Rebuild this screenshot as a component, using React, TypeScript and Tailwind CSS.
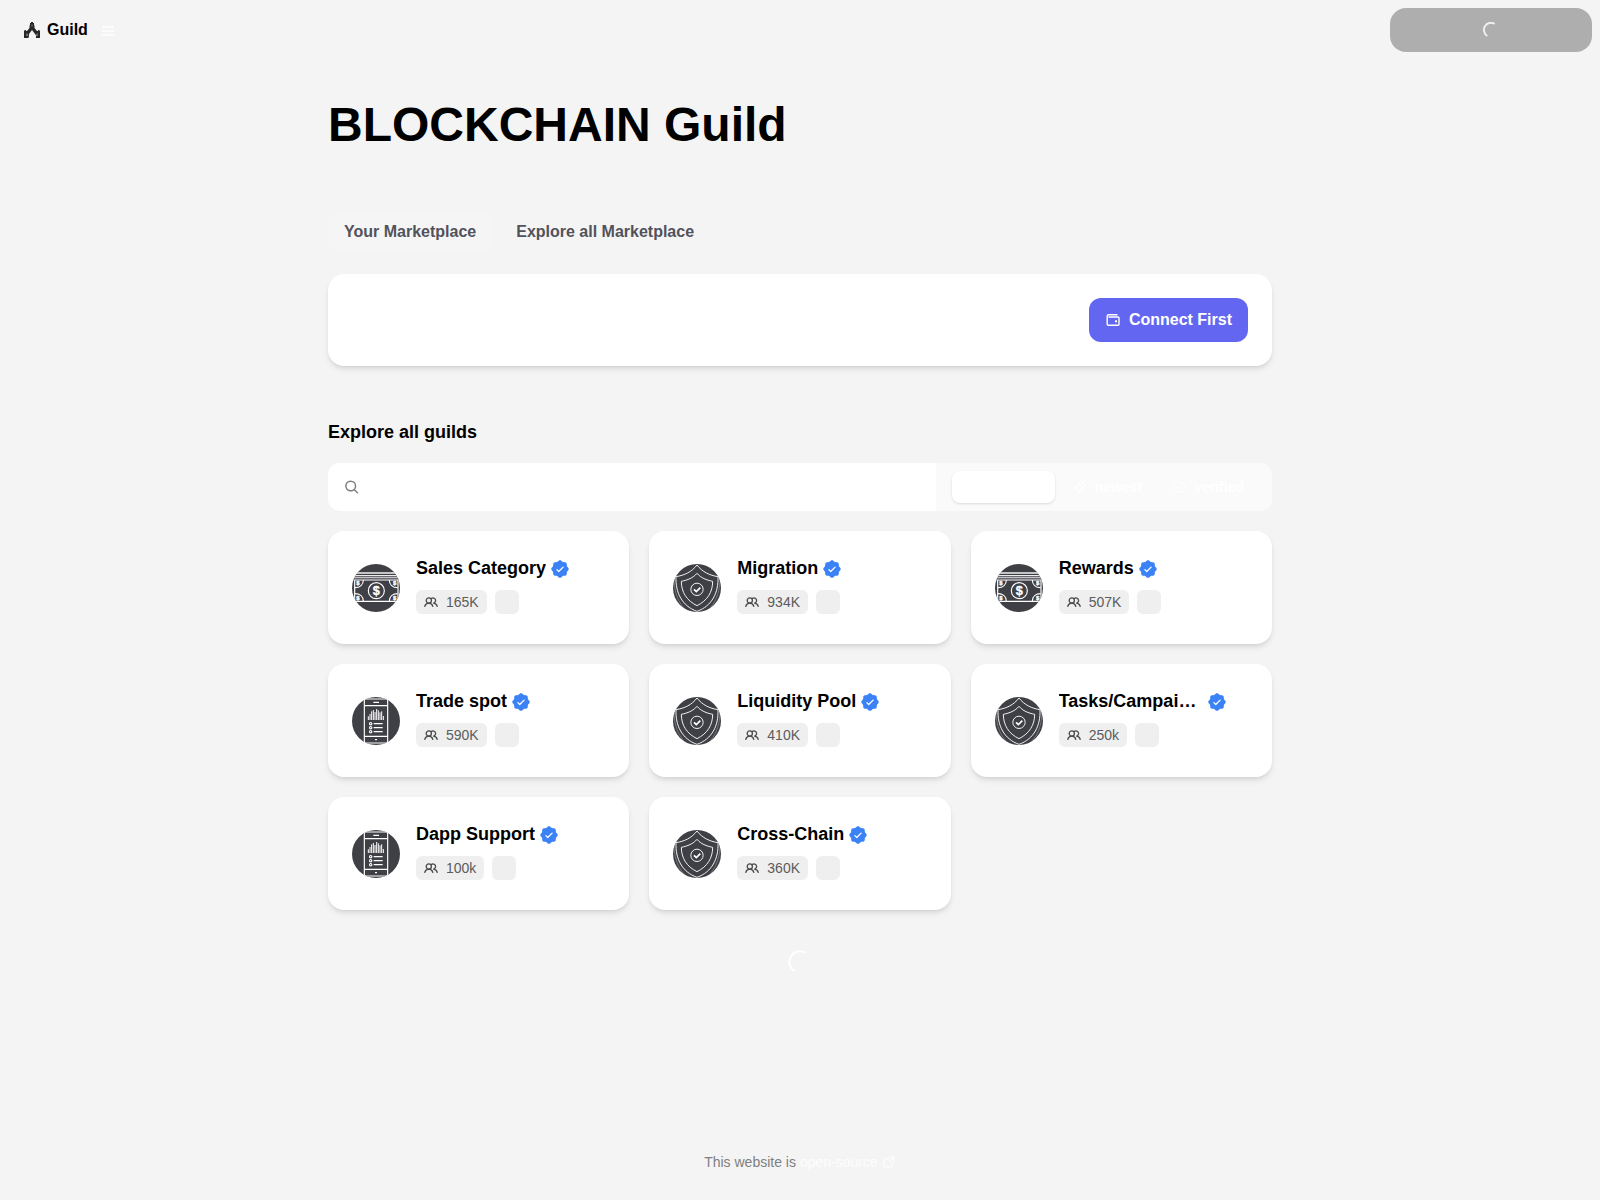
import React from 'react';
import { PiArrowSquareOutBold, PiMagnifyingGlassBold, PiSealCheck, PiSealCheckFill, PiSparkle } from 'react-icons/pi';

type Emblem = 'money' | 'shield' | 'phone';

interface Guild {
  name: string;
  members: string;
  emblem: Emblem;
}

const guilds: Guild[] = [
  { name: 'Sales Category', members: '165K', emblem: 'money' },
  { name: 'Migration', members: '934K', emblem: 'shield' },
  { name: 'Rewards', members: '507K', emblem: 'money' },
  { name: 'Trade spot', members: '590K', emblem: 'phone' },
  { name: 'Liquidity Pool', members: '410K', emblem: 'shield' },
  { name: 'Tasks/Campaigns', members: '250k', emblem: 'shield' },
  { name: 'Dapp Support', members: '100k', emblem: 'phone' },
  { name: 'Cross-Chain', members: '360K', emblem: 'shield' },
];

const GuildLogo: React.FC = () => (
  <svg className="size-4" viewBox="0 0 16 16" aria-hidden="true">
    <path
      d="M6 1h1V0h2v1h1v2l.5.5V6l2.500 3h1V8h1v1h.500V8h.500v8h-4v-2.500L11 12l-3-4-3 4v1.500L4.500 16H0V8h.500v1H1V8h1v1h1l2.500-3V3.500L6 3z"
      fill="#27272a"
    />
    <path d="M7.300 2.500h1.400v2H7.300z" fill="#71717a" />
    <path d="M2.500 11l1.500 1v2H2zM13.500 11L12 12v2h2z" fill="#71717a" />
  </svg>
);

const WalletIcon: React.FC = () => (
  <svg className="size-4" viewBox="0 0 16 16" fill="none" stroke="currentColor" strokeWidth="1.400" strokeLinejoin="round" aria-hidden="true">
    <path d="M12.500 2.700H3.600A1.400 1.400 0 0 0 2.200 4v8.200a1 1 0 0 0 1 1h9.800a1 1 0 0 0 1-1V6a1 1 0 0 0-1-1H3.500" />
    <path d="M10 8.200h2v2h-2z" fill="currentColor" stroke="none" />
  </svg>
);

const MembersIcon: React.FC = () => (
  <svg className="size-[14px]" viewBox="0 0 14 14" fill="none" stroke="#4b4b4b" strokeWidth="1.300" strokeLinecap="round" aria-hidden="true">
    <circle cx="4.800" cy="5.500" r="2.600" />
    <path d="M.8 11.300c.5-2 2-3.100 4-3.100s3.500 1.100 4 3.100" />
    <path d="M7.500 3.400a2.600 2.600 0 1 1 1.700 4.700c2 0 3.500 1.200 4 3.200" />
  </svg>
);

const Spinner: React.FC<{ className: string; strokeWidth: number }> = ({ className, strokeWidth }) => (
  <svg className={className} viewBox="0 0 24 24" fill="none" stroke="currentColor" strokeWidth={strokeWidth} aria-hidden="true">
    <path d="M17.500 2.800A10.600 10.600 0 0 0 6.500 21" />
  </svg>
);

const MoneyEmblem: React.FC = () => (
  <>
    <g fill="#fff">
      <path d="M8 24h128v6H8z" opacity="0.7" />
      <path d="M6 33h132v4H6zM6 40h132v3H6z" opacity="0.9" />
    </g>
    <g fill="none" stroke="#fff" strokeWidth="3.500">
      <path d="M8 48h130v64H8z" />
      <circle cx="73" cy="80" r="24" />
      <path d="M34 48c0 14-10 23-25 23M112 48c0 14 10 23 25 23M34 112c0-14-10-23-25-23M112 112c0-14 10-23 25-23" />
    </g>
    <g fill="#fff" stroke="#fff" fontWeight="700" textAnchor="middle">
      <text x="73" y="93" fontSize="38" strokeWidth="1">$</text>
      <g strokeWidth="1">
        <text x="18" y="63" fontSize="18">$</text>
        <text x="128" y="63" fontSize="18">$</text>
        <text x="18" y="109" fontSize="18">$</text>
        <text x="128" y="109" fontSize="18">$</text>
      </g>
    </g>
  </>
);

const ShieldEmblem: React.FC = () => (
  <g fill="none" stroke="#fff" strokeWidth="2.800">
    <path d="M72 3C56 24 34 34 9 38c-2 48 18 88 63 104 45-16 65-56 63-104C110 34 88 24 72 3z" />
    <path d="M3 50c2 36 12 66 36 88M141 50c-2 36-12 66-36 88" opacity="0.3" />
    <path d="M72 28C60 42 44 48 25 52c0 32 16 58 47 73 31-15 47-41 47-73-19-4-35-10-47-24z" />
    <circle cx="72" cy="76" r="18.500" />
    <path d="M63 76l7 7 12-12" strokeWidth="5" />
  </g>
);

const PhoneEmblem: React.FC = () => (
  <g fill="none" stroke="#fff" strokeWidth="3.500">
    <rect x="37" y="6" width="70" height="132" rx="5" />
    <path d="M37 26h70M37 118h70M64 16h17M69 128h6" />
    <path d="M49 69V58M54 69V51M59 69V43M64 69V39M69 69V45M74 69V36M79 69V40M84 69V46M89 69V43M94 69V57" strokeWidth="3" />
    <circle cx="56" cy="80" r="3.500" />
    <circle cx="56" cy="92" r="3.500" />
    <circle cx="56" cy="104" r="3.500" />
    <path d="M65 80h27M65 92h27M65 104h27" />
  </g>
);

const GuildAvatar: React.FC<{ emblem: Emblem }> = ({ emblem }) => (
  <div className="size-12 shrink-0 overflow-hidden rounded-full bg-[#3f3f46]">
    <svg className="size-12" viewBox="0 0 144 144" aria-hidden="true">
      {emblem === 'money' && <MoneyEmblem />}
      {emblem === 'shield' && <ShieldEmblem />}
      {emblem === 'phone' && <PhoneEmblem />}
    </svg>
  </div>
);

const GuildCard: React.FC<{ guild: Guild }> = ({ guild }) => (
  <article className="flex items-center gap-4 rounded-2xl bg-white p-6 shadow-md">
    <GuildAvatar emblem={guild.emblem} />
    <div className="min-w-0 pb-[6px]">
      <div className="flex h-[26px] items-center gap-1">
        <h3 className="max-w-36 truncate text-lg font-bold text-black">{guild.name}</h3>
        <PiSealCheckFill className="mt-[2px] size-5 shrink-0 text-[#3b82f6]" />
      </div>
      <div className="mt-[9px] flex gap-2">
        <span className="flex h-6 items-center gap-2 rounded-md bg-[#efefef] px-2 text-sm text-[#5c5c5c]">
          <MembersIcon />
          {guild.members}
        </span>
        <span className="size-6 rounded-md bg-[#efefef]" />
      </div>
    </div>
  </article>
);

const App: React.FC = () => {
  return (
    <div className="flex min-h-screen flex-col bg-[#f4f4f4] font-['Liberation_Sans',Arial,sans-serif]">
      {/* Header */}
      <header className="flex h-[60px] items-center justify-between px-2">
        <div className="flex items-center gap-[14px] pl-4">
          <a href="#" className="flex items-center gap-[7px] font-bold text-black">
            <GuildLogo />
            Guild
          </a>
          <button type="button" aria-label="Menu" className="pt-[2px] text-white/70">
            <svg className="h-[10px] w-3" viewBox="0 0 12 10" fill="currentColor" aria-hidden="true">
              <path d="M0 0h12v2H0zM0 4h12v2H0zM0 8h12v2H0z" />
            </svg>
          </button>
        </div>
        <button
          type="button"
          aria-label="Loading"
          disabled
          className="flex h-11 w-[202px] items-center justify-center rounded-2xl bg-[#aeaeae] text-white/80"
        >
          <Spinner className="size-4" strokeWidth={3} />
        </button>
      </header>

      {/* Content */}
      <main className="mx-auto w-full max-w-5xl px-10 pt-[41px]">
        <h1 className="text-5xl font-bold text-black">BLOCKCHAIN Guild</h1>

        <nav className="mt-[61px] flex gap-2 font-semibold text-[#52525b]">
          <button type="button" className="h-11 rounded-xl bg-[#f5f5f5] px-4">
            Your Marketplace
          </button>
          <button type="button" className="h-11 rounded-xl px-4">
            Explore all Marketplace
          </button>
        </nav>

        <section className="mt-5 flex justify-end rounded-2xl bg-white p-6 shadow-md">
          <button type="button" className="flex h-11 items-center gap-2 rounded-xl bg-[#6366f1] px-4 font-semibold text-white">
            <WalletIcon />
            Connect First
          </button>
        </section>

        <section className="mt-[52px]">
          <h2 className="text-lg font-bold text-black">Explore all guilds</h2>

          {/* Search and filters */}
          <div className="mt-[17px] flex h-12 overflow-hidden rounded-xl bg-white">
            <label className="flex grow items-center pl-4 text-[#7f7f7f]">
              <PiMagnifyingGlassBold className="size-4" />
              <input type="text" aria-label="Search guilds" className="ml-2 w-full bg-transparent text-black outline-none" />
            </label>
            <div className="flex shrink-0 items-center gap-[6px] bg-[#fafafa] px-4 text-sm font-semibold text-white">
              <button type="button" aria-label="featured" className="h-8 w-[103px] rounded-lg bg-white shadow" />
              <button type="button" className="flex h-8 items-center gap-2 px-3">
                <PiSparkle className="size-[14px]" />
                newest
              </button>
              <button type="button" className="flex h-8 items-center gap-2 px-3">
                <PiSealCheck className="size-[14px]" />
                verified
              </button>
            </div>
          </div>

          <div className="mt-5 grid grid-cols-1 gap-5 md:grid-cols-2 lg:grid-cols-3">
            {guilds.map((guild) => (
              <GuildCard key={guild.name} guild={guild} />
            ))}
          </div>
        </section>

        <div className="mt-10 flex justify-center text-white">
          <Spinner className="size-6" strokeWidth={2} />
        </div>
      </main>

      {/* Footer */}
      <footer className="mt-auto flex items-center justify-center gap-1 pb-7 text-sm text-[#7f7f7f]">
        This website is
        <a href="#" className="flex items-center gap-1 text-white/80">
          open-source
          <PiArrowSquareOutBold className="size-[14px]" />
        </a>
      </footer>
    </div>
  );
};

export default App;
